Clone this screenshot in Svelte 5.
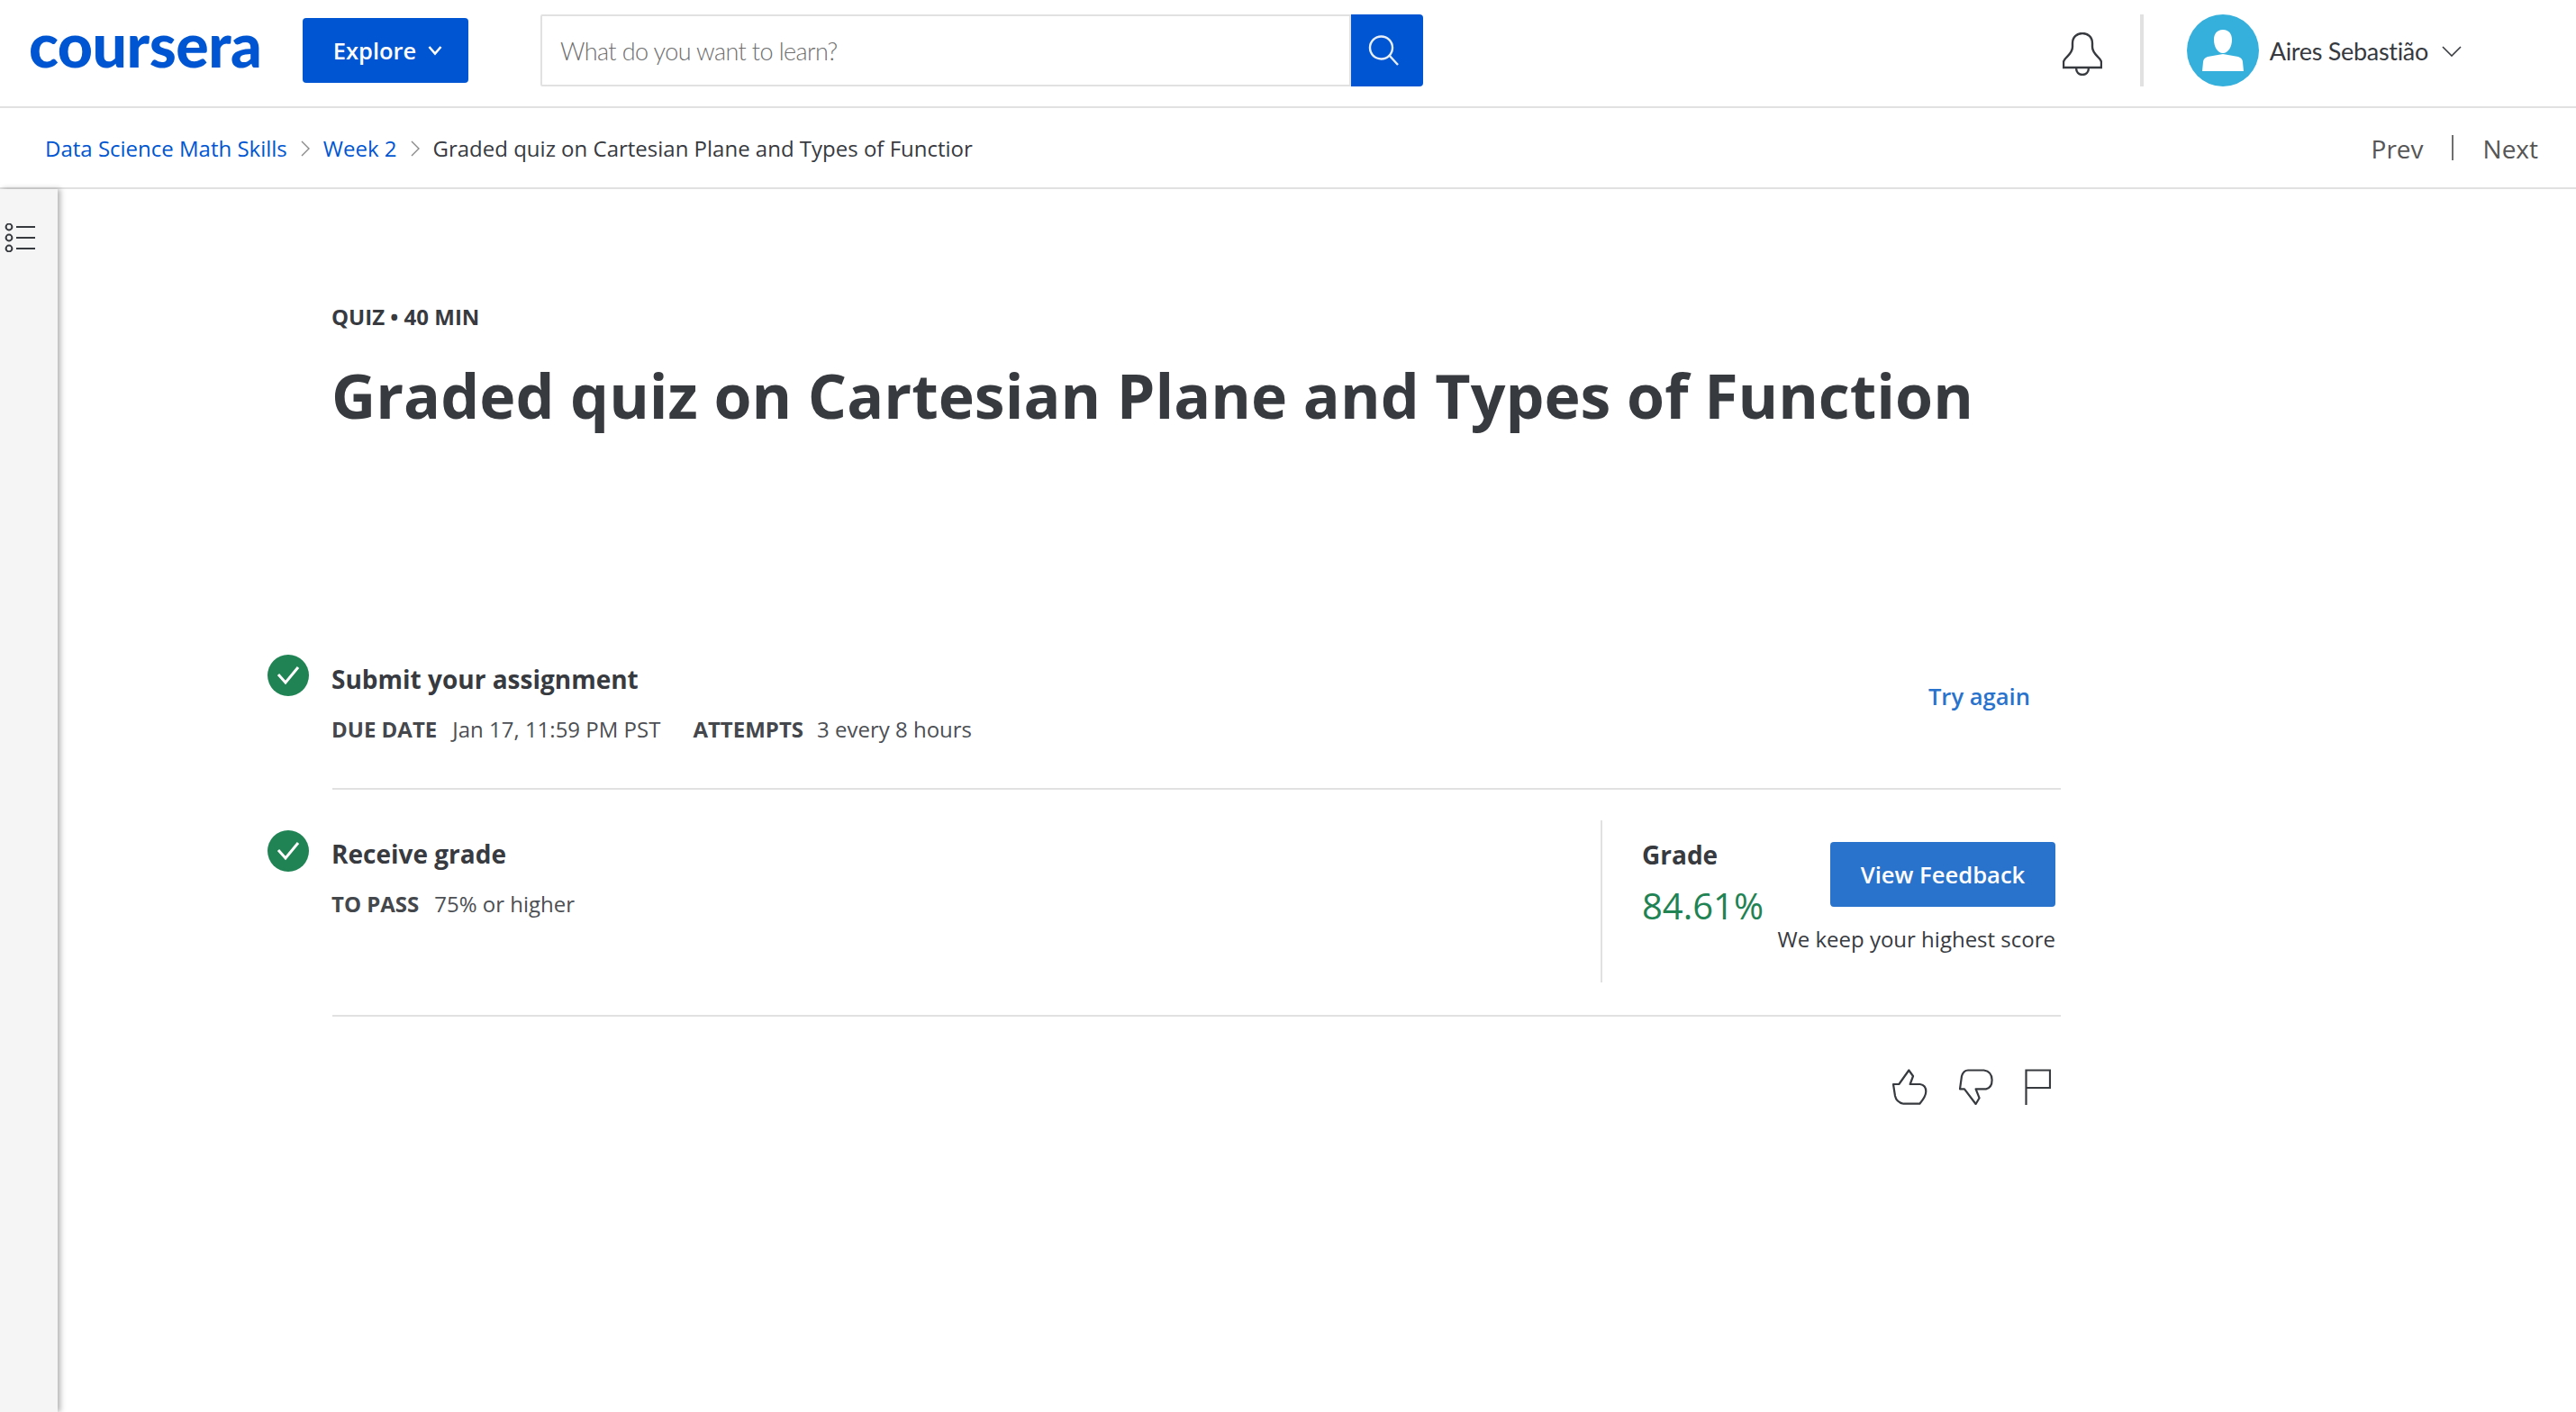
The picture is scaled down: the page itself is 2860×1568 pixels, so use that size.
<script>
  const crumbs = ['Data Science Math Skills', 'Week 2'];
</script>

<div class="page">
  <header class="top">
    <span class="logo">coursera</span>
    <button class="explore">Explore
      <svg width="18" height="12" viewBox="0 0 18 12"><path d="M2.500 2l6.500 7.500L15.500 2" fill="none" stroke="#fff" stroke-width="2.600"/></svg>
    </button>
    <div class="search">
      <div class="field">What do you want to learn?</div>
      <div class="go">
        <svg width="34" height="40" viewBox="0 0 34 40"><circle cx="14.500" cy="15" r="12.500" fill="none" stroke="#e8eef8" stroke-width="2.400"/><path d="M23 23l10 11" stroke="#e8eef8" stroke-width="2.400"/></svg>
      </div>
    </div>
    <div class="spacer"></div>
    <svg class="bell" width="44" height="48" viewBox="0 0 44 48"><path d="M1 39h42v-6c0-5-10-8-10-17v-4C33 5 28 1 22 1S11 5 11 12v4c0 9-10 12-10 17zM15 39c0 5 3 8 7 8s7-3 7-8" fill="none" stroke="#373a3f" stroke-width="2.400"/></svg>
    <div class="vsep"></div>
    <div class="avatar">
      <svg width="80" height="80" viewBox="0 0 80 80"><path d="M40 17c-7 0-10 5-10 11 0 8 4 15 10 15s10-7 10-15c0-6-3-11-10-11zM17 63l1-10c0-3 2-5 5-6l17-3 17 3c3 1 5 3 5 6l1 10z" fill="#fff"/></svg>
    </div>
    <span class="name">Aires Sebastião</span>
    <svg class="chev" width="22" height="12" viewBox="0 0 22 12"><path d="M1 1l10 10L21 1" fill="none" stroke="#373a3f" stroke-width="1.600"/></svg>
  </header>

  <nav class="crumbs">
    {#each crumbs as c}
      <a href="#top">{c}</a>
      <svg width="10" height="20" viewBox="0 0 10 20"><path d="M1 2l8 8-8 8" fill="none" stroke="#8a8a8a" stroke-width="1.400"/></svg>
    {/each}
    <span class="cur">Graded quiz on Cartesian Plane and Types of Functior</span>
    <div class="spacer"></div>
    <span class="pn">Prev</span>
    <i class="pnsep"></i>
    <span class="pn">Next</span>
  </nav>

  <div class="body">
    <aside class="side">
      <svg width="36" height="32" viewBox="0 0 36 32"><g fill="none" stroke="#373a3f" stroke-width="2"><circle cx="5" cy="4" r="3.400"/><circle cx="5" cy="16" r="3.400"/><circle cx="5" cy="28" r="3.400"/><path d="M13 4h21M13 16h21M13 28h21"/></g></svg>
    </aside>
    <main class="main">
      <div class="kicker">QUIZ • 40 MIN</div>
      <h1>Graded quiz on Cartesian Plane and Types of Function</h1>

      <section class="row first">
        <svg class="ok" width="46" height="46" viewBox="0 0 46 46"><circle cx="23" cy="23" r="23" fill="#1f8354"/><path d="M12 22l8 9 14-17" fill="none" stroke="#fff" stroke-width="3"/></svg>
        <div class="info">
          <h2>Submit your assignment</h2>
          <p class="meta"><b>DUE DATE</b><span>Jan 17, 11:59 PM PST</span><b class="next">ATTEMPTS</b><span>3 every 8 hours</span></p>
        </div>
        <a class="try" href="#top">Try again</a>
      </section>

      <section class="row second">
        <svg class="ok" width="46" height="46" viewBox="0 0 46 46"><circle cx="23" cy="23" r="23" fill="#1f8354"/><path d="M12 22l8 9 14-17" fill="none" stroke="#fff" stroke-width="3"/></svg>
        <div class="info">
          <h2>Receive grade</h2>
          <p class="meta"><b>TO PASS</b><span>75% or higher</span></p>
        </div>
        <div class="grade">
          <div class="gtop">
            <div class="gval">
              <div class="glabel">Grade</div>
              <div class="pct">84.61%</div>
            </div>
            <button class="fb">View Feedback</button>
          </div>
          <div class="keep">We keep your highest score</div>
        </div>
      </section>

      <div class="acts">
        <svg width="39" height="40" viewBox="0 0 39 40"><path d="M1 17h6.300L18.300 1.500 23 8l-3.300 9h11q6.600 1 6.600 8c0 5-3 9-7 13.700H12.300Q4.500 37 3 30z" fill="none" stroke="#373a3f" stroke-width="2.200" stroke-linejoin="round"/></svg>
        <svg width="38" height="40" viewBox="0 0 38 40"><path d="M1 22.300 3 8Q5 1.500 10 1.500h17.600Q36.600 3 36.600 12.300 36.600 21 30 22.300H18.600l4 10-4 6.700L6 22.300z" fill="none" stroke="#373a3f" stroke-width="2.200" stroke-linejoin="round"/></svg>
        <svg width="29" height="40" viewBox="0 0 29 40"><path d="M1.500 40V1.500H28V21H1.500" fill="none" stroke="#373a3f" stroke-width="2.200"/></svg>
      </div>
    </main>
  </div>
</div>

<style>
  :global(body) { margin: 0; background: #fff; }
  .page { width: 2860px; height: 1568px; overflow: hidden; display: flex; flex-direction: column; font-family: "Open Sans", sans-serif; color: #373a3f; }
  .top { height: 118px; flex: none; border-bottom: 2px solid #e1e1e1; display: flex; align-items: center; padding: 0 0 0 32px; }
  .spacer { flex: 1; }
  .logo { width: 304px; flex: none; font-family: Lato, sans-serif; font-weight: 900; font-size: 68px; line-height: 60px; color: #0056d2; letter-spacing: -0.5px; margin-top: -20px; }
  .explore { width: 184px; height: 72px; margin: -6px 80px 0 0; flex: none; border: 0; border-radius: 4px; background: #0056d2; color: #fff; font: 600 25.500px "Open Sans", sans-serif; display: flex; align-items: center; justify-content: center; gap: 12px; padding: 0 0 0 6px; box-sizing: border-box; }
  .search { width: 980px; height: 80px; margin-top: -6px; flex: none; display: flex; }
  .field { flex: 1; box-sizing: border-box; border: 2px solid #e1e1e1; border-radius: 2px 0 0 2px; padding-left: 20px; display: flex; align-items: center; font: 300 27px Lato, sans-serif; letter-spacing: -0.600px; color: #6f6f6f; }
  .go { width: 80px; background: #0056d2; border-radius: 0 4px 4px 0; display: flex; align-items: center; justify-content: center; }
  .go svg { margin: 4px 8px 0 0; }
  .bell { margin-top: 2px; }
  .vsep { width: 4px; height: 80px; background: #e1e1e1; margin: -6px 48px 0 42px; }
  .avatar { width: 80px; height: 80px; border-radius: 50%; background: #35b0dc; margin-top: -6px; }
  .avatar svg { display: block; }
  .name { font: 400 27px Lato, sans-serif; letter-spacing: -0.300px; margin: -6px 15px 0 12px; color: #373a3f; }
  .chev { margin: -4px 127px 0 0; }

  .crumbs { height: 88px; flex: none; border-bottom: 2px solid #e1e1e1; display: flex; align-items: center; padding: 0 42px 0 50px; font-size: 24px; }
  .crumbs a { color: #0056d2; text-decoration: none; margin-top: 1px; }
  .crumbs svg { margin: 2px 15px 0 15px; }
  .cur { color: #373a3f; margin-top: 1px; }
  .pn { font-size: 28px; color: #565656; margin-top: 1px; }
  .pnsep { width: 2px; height: 28px; background: #6f6f6f; margin: 0 33px 0 31px; }

  .body { flex: 1; display: flex; min-height: 0; }
  .side { width: 64px; flex: none; background: #f5f5f5; box-shadow: 3px 0 6px rgba(0,0,0,.3); padding: 38px 0 0 5px; box-sizing: border-box; }
  .side svg { display: block; }
  .main { width: 1919px; margin-left: 305px; }
  .kicker { font-size: 24px; line-height: 32px; font-weight: 700; margin: 126px 0 0 -1px; }
  h1 { font-size: 68px; line-height: 80px; font-weight: 700; margin: 31px 0 0 -1px; white-space: nowrap; }
  .row { display: flex; position: relative; }
  .ok { position: absolute; left: -72px; }
  .first { margin-top: 248px; height: 148px; border-bottom: 2px solid #e1e1e1; }
  .first .ok { top: 0; }
  .info { flex: 1; padding-top: 9px; margin-left: -1px; }
  h2 { margin: 0; font-size: 28px; line-height: 36px; font-weight: 700; }
  .meta { margin: 22px 0 0; font-size: 24px; line-height: 32px; }
  .meta b { font-weight: 700; margin-right: 17px; color: #44474b; }
  .meta span { color: #4c4f54; }
  .meta .next { margin: 0 15px 0 36px; }
  .try { font-size: 25.600px; font-weight: 600; color: #2a73cc; text-decoration: none; margin: 29px 34px 0 0; line-height: 36px; }
  .second { height: 250px; border-bottom: 2px solid #e1e1e1; }
  .second .ok { top: 45px; }
  .second .info { padding-top: 53px; }
  .grade { width: 511px; height: 180px; margin: 34px 0 0; box-sizing: border-box; border-left: 2px solid #e1e1e1; padding: 20px 6px 0 44px; display: flex; flex-direction: column; }
  .gtop { display: flex; justify-content: space-between; }
  .glabel { font-size: 28px; line-height: 36px; font-weight: 700; }
  .pct { font-size: 40px; line-height: 54px; color: #1f8354; margin-top: 12px; }
  .fb { width: 250px; height: 72px; margin-top: 4px; border: 0; border-radius: 4px; background: #2a73cc; color: #fff; font: 600 25.600px "Open Sans", sans-serif; padding: 0; }
  .keep { font-size: 24px; line-height: 32px; text-align: right; margin-top: -6px; }
  .acts { display: flex; justify-content: flex-end; align-items: flex-start; gap: 35px; padding: 58px 11px 0 0; }
  .acts svg { display: block; }
</style>
